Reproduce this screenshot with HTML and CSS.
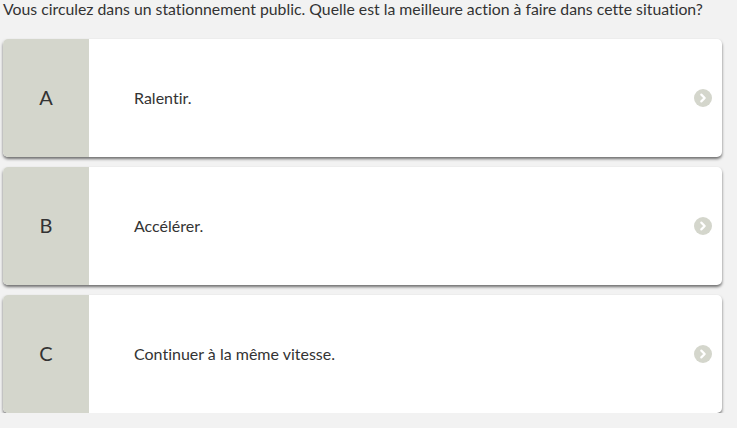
FILE: index.html
```html
<!DOCTYPE html>
<html lang="fr">
<head>
<meta charset="utf-8">
<link rel="stylesheet" href="styles.css">
</head>
<body>
<div class="page">
  <p class="question">Vous circulez dans un stationnement public. Quelle est la meilleure action à faire dans cette situation?</p>
  <div class="answers">
    <div class="card">
      <div class="letter">A</div>
      <div class="text">Ralentir.</div>
      <span class="go"><svg viewBox="0 0 18 18" width="18" height="18"><circle cx="9" cy="9" r="9" fill="#d4d6cc"/><path d="M7.3 5.6 L10.7 9 L7.3 12.4" fill="none" stroke="#fff" stroke-width="2.2" stroke-linecap="round" stroke-linejoin="round"/></svg></span>
    </div>
    <div class="card">
      <div class="letter">B</div>
      <div class="text">Accélérer.</div>
      <span class="go"><svg viewBox="0 0 18 18" width="18" height="18"><circle cx="9" cy="9" r="9" fill="#d4d6cc"/><path d="M7.3 5.6 L10.7 9 L7.3 12.4" fill="none" stroke="#fff" stroke-width="2.2" stroke-linecap="round" stroke-linejoin="round"/></svg></span>
    </div>
    <div class="card">
      <div class="letter">C</div>
      <div class="text">Continuer à la même vitesse.</div>
      <span class="go"><svg viewBox="0 0 18 18" width="18" height="18"><circle cx="9" cy="9" r="9" fill="#d4d6cc"/><path d="M7.3 5.6 L10.7 9 L7.3 12.4" fill="none" stroke="#fff" stroke-width="2.2" stroke-linecap="round" stroke-linejoin="round"/></svg></span>
    </div>
  </div>
</div>
</body>
</html>
```

FILE: styles.css
```css
html, body {
  margin: 0;
  padding: 0;
  background: #f2f2f2;
}
.page {
  padding: 0 15px 0 3px;
  font-family: Lato, "Liberation Sans", sans-serif;
  font-variant-ligatures: none;
  color: #333;
}
.question {
  margin: 0;
  font-size: 15.8px;
  line-height: 18px;
  height: 39px;
}
.answers {
  display: flex;
  flex-direction: column;
  gap: 10px;
}
.card {
  display: flex;
  align-items: center;
  height: 118px;
  background: #fff;
  border-radius: 5px;
  overflow: hidden;
  box-shadow: 0 2px 3px rgba(0,0,0,0.55);
}
.letter {
  width: 86px;
  align-self: stretch;
  background: #d4d6cc;
  display: flex;
  align-items: center;
  justify-content: center;
  font-size: 20px;
  padding-bottom: 3px;
  box-sizing: border-box;
  color: #333;
}
.text {
  flex: 1;
  padding-left: 45px;
  padding-bottom: 2px;
  font-size: 16px;
  color: #333;
}
.go {
  display: flex;
  margin-right: 10px;
}
```
